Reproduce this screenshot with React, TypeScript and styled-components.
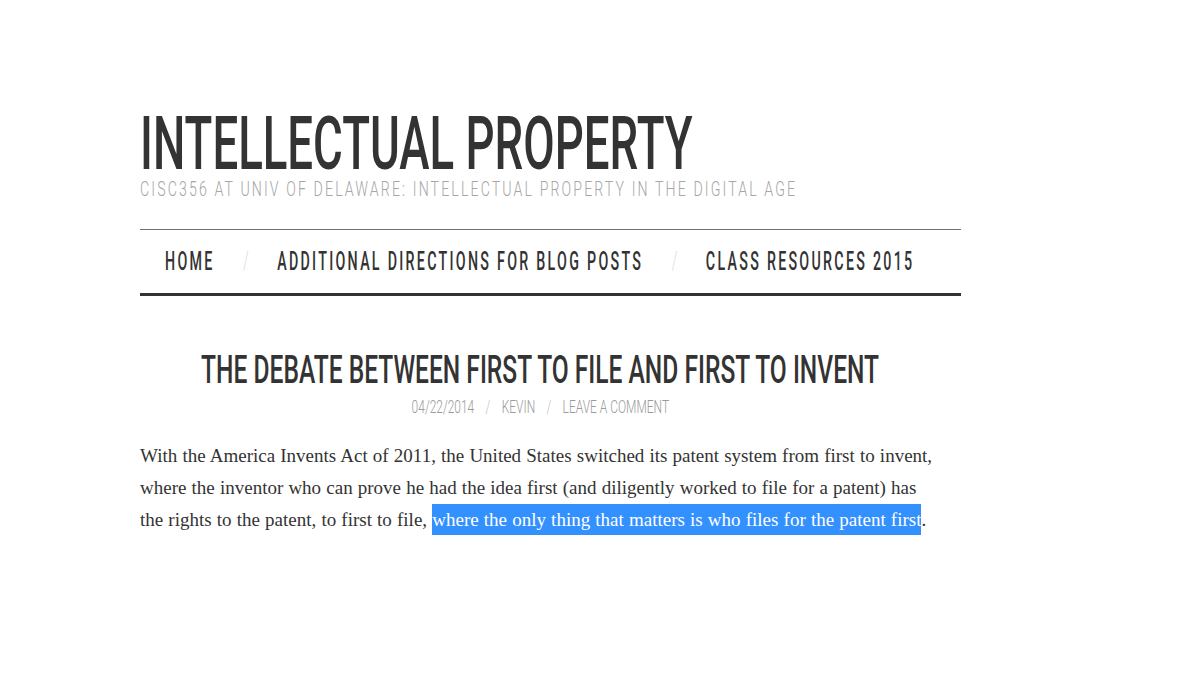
import React from 'react';
import styled, { createGlobalStyle } from 'styled-components';

const GlobalStyle = createGlobalStyle`
  html, body {
    margin: 0;
    padding: 0;
    background: #fff;
  }
`;

// no condensed face is installed, so the headline type is Roboto squeezed horizontally
const display = `Roboto, "DejaVu Sans", sans-serif`;

const Squeeze = styled.span<{ $x: number; $origin?: string }>`
  display: inline-block;
  flex: none;
  white-space: nowrap;
  transform: scaleX(${p => p.$x});
  transform-origin: ${p => p.$origin || 'left'} center;
`;

const Page = styled.div`
  width: 1200px;
  height: 675px;
  overflow: hidden;
  padding: 111px 0 0 140px;
  box-sizing: border-box;
  font-family: ${display};
`;

const Masthead = styled.header`
  width: 821px;
`;

const SiteTitle = styled.h1`
  margin: 0;
  font-size: 74px;
  line-height: 66px;
  font-weight: 500;
  color: #333;
`;

const Tagline = styled.p`
  margin: 0;
  font-size: 20px;
  line-height: 24px;
  font-weight: 300;
  color: #a6a6a6;
  letter-spacing: 3px;
`;

const Nav = styled.nav`
  margin-top: 28px;
  border-top: 1px solid #707070;
  border-bottom: 3px solid #333;
  height: 63px;
  display: flex;
  align-items: center;
  padding-left: 25px;
`;

const NavLink = styled.a`
  font-size: 25px;
  font-weight: 500;
  color: #333;
  text-decoration: none;
  letter-spacing: 4px;
`;

const NavSlash = styled.span`
  font-size: 25px;
  font-weight: 300;
  color: #ddd;
  margin: 0 50px;
`;

const Post = styled.article`
  width: 800px;
  margin-top: 52px;
`;

const PostTitle = styled.h2`
  margin: 0;
  display: flex;
  justify-content: center;
  font-size: 39px;
  line-height: 44px;
  font-weight: 500;
  color: #333;
`;

const Meta = styled.div`
  margin-top: 4px;
  display: flex;
  justify-content: center;
  font-size: 19px;
  line-height: 22px;
  font-weight: 300;
  color: #9a9a9a;
`;

const MetaSlash = styled.span`
  color: #c4c4c4;
  margin: 0 18px;
`;

const Body = styled.p`
  margin: 22px 0 0;
  font-family: "Liberation Serif", "DejaVu Serif", serif;
  font-size: 19px;
  line-height: 32px;
  word-spacing: 0.4px;
  color: #333;
`;

const Selected = styled.span`
  background: #3390ff;
  color: #fff;
  padding: 5px 0;
`;

export default function App() {
  return (
    <Page>
      <GlobalStyle />
      <Masthead>
        <SiteTitle>
          <Squeeze $x={0.616}>INTELLECTUAL PROPERTY</Squeeze>
        </SiteTitle>
        <Tagline>
          <Squeeze $x={0.707}>CISC356 AT UNIV OF DELAWARE: INTELLECTUAL PROPERTY IN THE DIGITAL AGE</Squeeze>
        </Tagline>
        <Nav>
          <Squeeze $x={0.57}>
            <NavLink href="#">HOME</NavLink>
            <NavSlash>/</NavSlash>
            <NavLink href="#">ADDITIONAL DIRECTIONS FOR BLOG POSTS</NavLink>
            <NavSlash>/</NavSlash>
            <NavLink href="#">CLASS RESOURCES 2015</NavLink>
          </Squeeze>
        </Nav>
      </Masthead>
      <Post>
        <PostTitle>
          <Squeeze $x={0.63} $origin="center">THE DEBATE BETWEEN FIRST TO FILE AND FIRST TO INVENT</Squeeze>
        </PostTitle>
        <Meta>
          <Squeeze $x={0.63} $origin="center">
            04/22/2014<MetaSlash>/</MetaSlash>KEVIN<MetaSlash>/</MetaSlash>LEAVE A COMMENT
          </Squeeze>
        </Meta>
        <Body>
          With the America Invents Act of 2011, the United States switched its patent system from first to invent,
          where the inventor who can prove he had the idea first (and diligently worked to file for a patent) has
          the rights to the patent, to first to file,{' '}
          <Selected>where the only thing that matters is who files for the patent first</Selected>.
        </Body>
      </Post>
    </Page>
  );
}
